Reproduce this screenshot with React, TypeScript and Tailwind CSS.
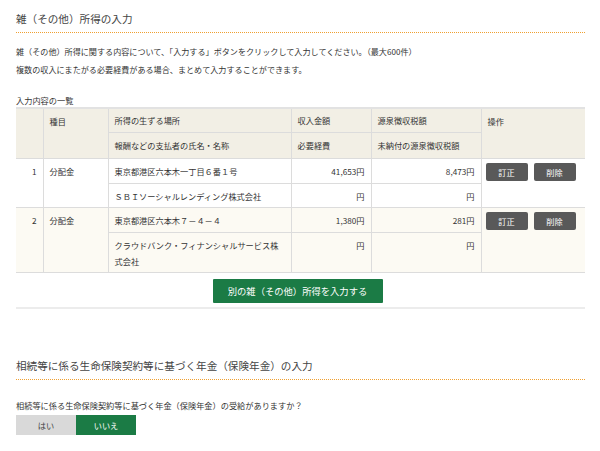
import React from "react";

const font = { fontFamily: '"Noto Sans CJK JP", "Noto Sans", sans-serif' };

type Row = {
  no: number;
  kind: string;
  place: string;
  payer: string[];
  income: string;
  tax: string;
  bg: string;
  tall?: boolean;
};

const rows: Row[] = [
  {
    no: 1,
    kind: "分配金",
    place: "東京都港区六本木一丁目６番１号",
    payer: ["ＳＢＩソーシャルレンディング株式会社"],
    income: "41,653円",
    tax: "8,473円",
    bg: "bg-white",
  },
  {
    no: 2,
    kind: "分配金",
    place: "東京都港区六本木７－４－４",
    payer: ["クラウドバンク・フィナンシャルサービス株", "式会社"],
    income: "1,380円",
    tax: "281円",
    bg: "bg-[#fcfaf3]",
    tall: true,
  },
];

function SectionTitle({ children }: { children: React.ReactNode }) {
  return (
    <div className="border-b border-dotted border-[#f0a030] pb-[6px]">
      <h2 className="text-[10.6px] leading-[14px] text-[#444]">{children}</h2>
    </div>
  );
}

export default function App() {
  return (
    <div className="w-[600px] h-[451px] bg-white text-[#333] overflow-hidden" style={font}>
      <div className="pl-4 w-[585px] pt-[12px]">
        <SectionTitle>雑（その他）所得の入力</SectionTitle>

        <div className="mt-[10px] text-[8.1px] leading-[18px]">
          <p>雑（その他）所得に関する内容について、「入力する」ボタンをクリックして入力してください。（最大600件）</p>
          <p>複数の収入にまたがる必要経費がある場合、まとめて入力することができます。</p>
        </div>

        <p className="mt-[15px] text-[8.2px] leading-[12px]">入力内容の一覧</p>

        <table className="mt-[1px] w-[569px] table-fixed border-collapse text-[8.2px] leading-[16px]">
          <colgroup>
            <col className="w-[27px]" />
            <col className="w-[65px]" />
            <col className="w-[183px]" />
            <col className="w-[80px]" />
            <col className="w-[110px]" />
            <col className="w-[104px]" />
          </colgroup>
          <thead className="bg-[#f2efe5]">
            <tr className="h-[24px] border-t-2 border-[#e2e2e2]">
              <th rowSpan={2} className="border-r border-[#dcdcdc]"></th>
              <th rowSpan={2} className="border-r border-[#dcdcdc] px-[6px] align-top pt-[4px] text-left font-normal">種目</th>
              <th className="border-r border-b border-[#dcdcdc] px-[6px] text-left font-normal">所得の生ずる場所</th>
              <th className="border-r border-b border-[#dcdcdc] px-[6px] text-left font-normal">収入金額</th>
              <th className="border-r border-b border-[#dcdcdc] px-[6px] text-left font-normal">源泉徴収税額</th>
              <th rowSpan={2} className="px-[6px] align-top pt-[4px] text-left font-normal">操作</th>
            </tr>
            <tr className="h-[26px] border-b border-[#dcdcdc]">
              <th className="border-r border-[#dcdcdc] px-[6px] text-left font-normal">報酬などの支払者の氏名・名称</th>
              <th className="border-r border-[#dcdcdc] px-[6px] text-left font-normal">必要経費</th>
              <th className="border-r border-[#dcdcdc] px-[6px] text-left font-normal">未納付の源泉徴収税額</th>
            </tr>
          </thead>
          {rows.map((r) => (
            <tbody key={r.no} className={r.bg}>
              <tr className="h-[25px]">
                <td rowSpan={2} className="border-r border-b border-[#dcdcdc] px-[6px] pt-[4px] align-top text-right">{r.no}</td>
                <td rowSpan={2} className="border-r border-b border-[#dcdcdc] px-[6px] pt-[4px] align-top">{r.kind}</td>
                <td className="border-r border-b border-[#dcdcdc] px-[6px]">{r.place}</td>
                <td className="border-r border-b border-[#dcdcdc] px-[6px] text-right">{r.income}</td>
                <td className="border-r border-b border-[#dcdcdc] px-[6px] text-right">{r.tax}</td>
                <td rowSpan={2} className="border-b border-[#dcdcdc] pl-[4px] pt-[4px] align-top">
                  <div className="flex gap-[6px]">
                    <button className="w-[42px] h-[18px] rounded-[2px] bg-[#595959] text-white text-[8.2px] leading-[18px]">訂正</button>
                    <button className="w-[42px] h-[18px] rounded-[2px] bg-[#595959] text-white text-[8.2px] leading-[18px]">削除</button>
                  </div>
                </td>
              </tr>
              <tr className={r.tall ? "h-[40px]" : "h-[24px]"}>
                <td className="border-r border-b border-[#dcdcdc] px-[6px] align-top pt-[4px]">
                  {r.payer.map((p) => (
                    <div key={p}>{p}</div>
                  ))}
                </td>
                <td className="border-r border-b border-[#dcdcdc] px-[6px] align-top pt-[4px] text-right">円</td>
                <td className="border-r border-b border-[#dcdcdc] px-[6px] align-top pt-[4px] text-right">円</td>
              </tr>
            </tbody>
          ))}
        </table>

        <div className="flex justify-center pr-[6px] pt-[6px] pb-[4px] border-b-2 border-[#ececec]">
          <button className="w-[170px] h-[24px] bg-[#1b7b45] text-white text-[9.3px] leading-[24px] rounded-[1px]">
            別の雑（その他）所得を入力する
          </button>
        </div>

        <div className="mt-[50px]">
          <SectionTitle>相続等に係る生命保険契約等に基づく年金（保険年金）の入力</SectionTitle>
        </div>

        <p className="mt-[19px] text-[8.2px] leading-[12px]">相続等に係る生命保険契約等に基づく年金（保険年金）の受給がありますか？</p>

        <div className="mt-[4px] flex">
          <button className="w-[60px] h-[20px] bg-[#d9d9d9] text-[#444] text-[8.2px] leading-[20px]">はい</button>
          <button className="w-[60px] h-[20px] bg-[#1b7b45] text-white text-[8.2px] leading-[20px]">いいえ</button>
        </div>
      </div>
    </div>
  );
}
